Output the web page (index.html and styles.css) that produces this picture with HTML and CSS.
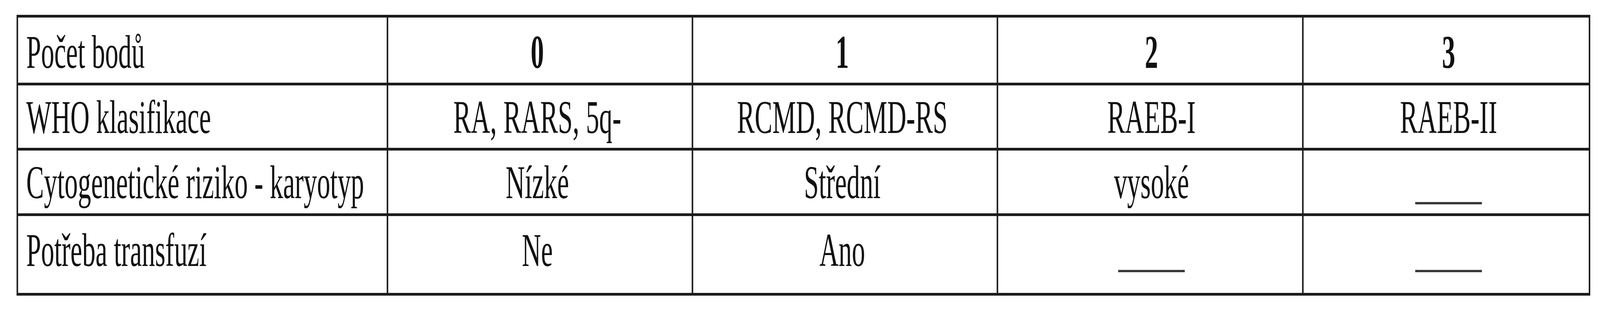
FILE: index.html
```html
<!DOCTYPE html>
<html lang="cs">
<head>
<meta charset="utf-8">
<title>Počet bodů</title>
<link rel="stylesheet" href="styles.css">
</head>
<body>
<div class="frame">
  <div class="table">
    <div class="cell label r1">Počet bodů</div>
    <div class="cell num r1 c2">0</div>
    <div class="cell num r1 c3">1</div>
    <div class="cell num r1 c4">2</div>
    <div class="cell num r1 c5">3</div>

    <div class="cell label r2">WHO klasifikace</div>
    <div class="cell r2 c2">RA, RARS, 5q-</div>
    <div class="cell r2 c3">RCMD, RCMD-RS</div>
    <div class="cell r2 c4">RAEB-I</div>
    <div class="cell r2 c5">RAEB-II</div>

    <div class="cell label r3">Cytogenetické riziko - karyotyp</div>
    <div class="cell r3 c2">Nízké</div>
    <div class="cell r3 c3">Střední</div>
    <div class="cell r3 c4">vysoké</div>
    <div class="cell r3 c5 dash">_____</div>

    <div class="cell label r4">Potřeba transfuzí</div>
    <div class="cell r4 c2">Ne</div>
    <div class="cell r4 c3">Ano</div>
    <div class="cell r4 c4 dash">_____</div>
    <div class="cell r4 c5 dash">_____</div>
  </div>
</div>
</body>
</html>
```

FILE: styles.css
```css
html, body {
  margin: 0;
  padding: 0;
  background: #ffffff;
}

body {
  font-family: "Liberation Serif", "Times New Roman", serif;
  font-size: 120px;
  color: #111111;
}

.frame {
  width: 100%;
  height: 800px;
  overflow: hidden;
}

/* The design is laid out on a 7245px-wide canvas; it is compressed
   horizontally when the window is narrower than that. */
.table {
  display: grid;
  grid-template-columns: 1669px 1374px 1374px 1376px 1291px;
  grid-template-rows: 167px 160px 161px 197px;
  gap: 7px;
  padding: 7px;
  background: #1c1c1c;
  width: max-content;
  margin: 38px 0 0 75px;
  transform-origin: -75px 0;
  transform: scaleX(0.56535);
}

@media (min-width: 7245px) {
  .table {
    transform: none;
  }
}

.cell {
  background: #ffffff;
  line-height: 1;
  text-align: center;
  white-space: nowrap;
  box-sizing: border-box;
}

.label {
  text-align: left;
  padding-left: 37px;
}

.num {
  font-weight: bold;
}

.c2, .c3 { padding-right: 24px; }
.c4 { padding-left: 12px; }
.c5 { padding-left: 22px; }

.r1 { padding-top: 29px; }
.r2 { padding-top: 22px; }
.r3 { padding-top: 22px; }
.r4 { padding-top: 28px; }

.dash {
  color: #3a3a3a;
}
```
